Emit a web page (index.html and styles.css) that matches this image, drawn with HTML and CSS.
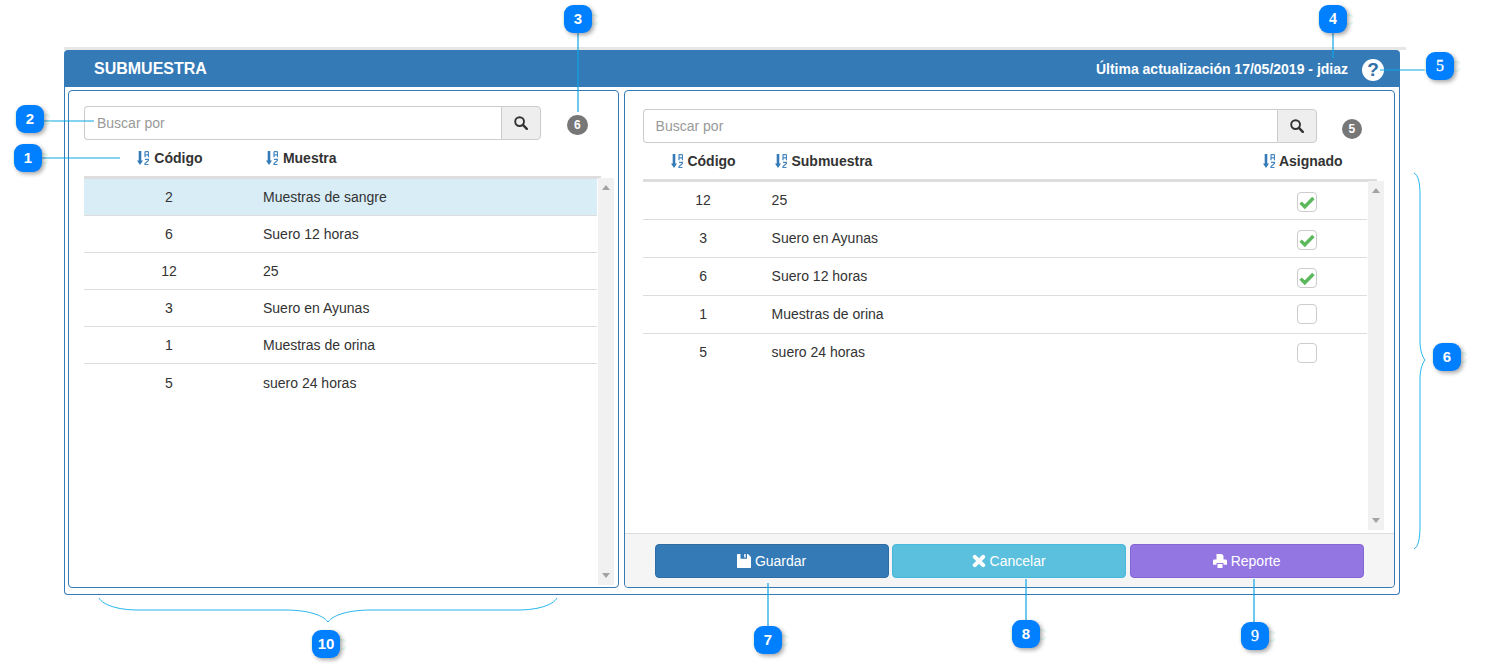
FILE: index.html
```html
<!DOCTYPE html>
<html lang="es">
<head>
  <meta charset="UTF-8">
  <title>Submuestra</title>
  <link rel="stylesheet" href="styles.css">
</head>
<body>
  <svg width="0" height="0" class="defs">
    <symbol id="i-sort" viewBox="0 0 12 14">
      <path d="M1.700 0h2.600v9.600h1.700L3 14 0 9.600h1.700z" fill="#337ab7"/>
      <path d="M8 6.200V1.100L8.600.6h2.300l.6.500v5.100M8 3.800h3.500M8 8.400h3.500v1L8 12.600v1h3.500" fill="none" stroke="#4485c0" stroke-width="1.200"/>
    </symbol>
    <symbol id="i-search" viewBox="0 0 14 14">
      <circle cx="5.600" cy="5.600" r="4.400" fill="none" stroke="#333" stroke-width="1.900"/>
      <path d="M8.900 8.900l3.900 3.900" stroke="#333" stroke-width="2.400" stroke-linecap="round"/>
    </symbol>
    <symbol id="i-check" viewBox="0 0 16 14">
      <path d="M1.600 7.600l4.200 4.200L14.400 3" fill="none" stroke="#5cb85c" stroke-width="3.400"/>
    </symbol>
  </svg>

  <div class="panel">
    <div class="panel-head">
      <span class="panel-title">SUBMUESTRA</span>
      <span class="panel-info">Última actualización 17/05/2019 - jdiaz</span>
      <span class="help">?</span>
    </div>
    <div class="panel-body">

      <div class="pane pane-left">
        <div class="search-row">
          <div class="search">
            <input class="search-input" type="text" placeholder="Buscar por">
            <button class="search-btn"><svg class="ico-search"><use href="#i-search"/></svg></button>
          </div>
          <span class="count">6</span>
        </div>
        <div class="list-head">
          <div class="col-code"><svg class="ico-sort"><use href="#i-sort"/></svg> Código</div>
          <div class="col-name"><svg class="ico-sort"><use href="#i-sort"/></svg> Muestra</div>
        </div>
        <div class="list-wrap">
          <div class="list">
            <div class="row selected"><div class="col-code">2</div><div class="col-name">Muestras de sangre</div></div>
            <div class="row"><div class="col-code">6</div><div class="col-name">Suero 12 horas</div></div>
            <div class="row"><div class="col-code">12</div><div class="col-name">25</div></div>
            <div class="row"><div class="col-code">3</div><div class="col-name">Suero en Ayunas</div></div>
            <div class="row"><div class="col-code">1</div><div class="col-name">Muestras de orina</div></div>
            <div class="row"><div class="col-code">5</div><div class="col-name">suero 24 horas</div></div>
          </div>
          <div class="scrollbar"><span class="arrow-up"></span><span class="arrow-down"></span></div>
        </div>
      </div>

      <div class="pane pane-right">
        <div class="pane-main">
          <div class="search-row">
            <div class="search">
              <input class="search-input" type="text" placeholder="Buscar por">
              <button class="search-btn"><svg class="ico-search"><use href="#i-search"/></svg></button>
            </div>
            <span class="count">5</span>
          </div>
          <div class="list-head">
            <div class="col-code"><svg class="ico-sort"><use href="#i-sort"/></svg> Código</div>
            <div class="col-name"><svg class="ico-sort"><use href="#i-sort"/></svg> Submuestra</div>
            <div class="col-check"><svg class="ico-sort"><use href="#i-sort"/></svg> Asignado</div>
          </div>
          <div class="list-wrap">
            <div class="list">
              <div class="row"><div class="col-code">12</div><div class="col-name">25</div><div class="col-check"><span class="box"><svg class="ico-check"><use href="#i-check"/></svg></span></div></div>
              <div class="row"><div class="col-code">3</div><div class="col-name">Suero en Ayunas</div><div class="col-check"><span class="box"><svg class="ico-check"><use href="#i-check"/></svg></span></div></div>
              <div class="row"><div class="col-code">6</div><div class="col-name">Suero 12 horas</div><div class="col-check"><span class="box"><svg class="ico-check"><use href="#i-check"/></svg></span></div></div>
              <div class="row"><div class="col-code">1</div><div class="col-name">Muestras de orina</div><div class="col-check"><span class="box"></span></div></div>
              <div class="row"><div class="col-code">5</div><div class="col-name">suero 24 horas</div><div class="col-check"><span class="box"></span></div></div>
            </div>
            <div class="scrollbar"><span class="arrow-up"></span><span class="arrow-down"></span></div>
          </div>
        </div>
        <div class="pane-foot">
          <button class="btn btn-save">
            <svg class="ico-btn" viewBox="0 0 14 14"><path fill="#fff" fill-rule="evenodd" d="M.8 0H11l3 3v10.200c0 .4-.4.800-.8.800H.8c-.4 0-.8-.4-.8-.8V.8C0 .4.400 0 .8 0zM3.500 0v4.800h6.500V0H8.700v3.400H7.200V0z"/></svg>
            Guardar
          </button>
          <button class="btn btn-cancel">
            <svg class="ico-btn" viewBox="0 0 14 14"><path d="M2.800 2.800l8.400 8.400m0-8.400l-8.400 8.400" stroke="#fff" stroke-width="4" stroke-linecap="round" fill="none"/></svg>
            Cancelar
          </button>
          <button class="btn btn-report">
            <svg class="ico-btn" viewBox="0 0 14 14"><path fill="#fff" d="M3.500 0h5.300L10.500 1.700V5.500h-7zM0 7c0-.8.600-1.400 1.400-1.400h11.200c.8 0 1.400.6 1.400 1.400v3.700h-3.500V9H3.500v1.700H0zM4.500 10h5v4h-5z"/></svg>
            Reporte
          </button>
        </div>
      </div>

    </div>
  </div>

  <!-- anotaciones -->
  <svg class="callouts" width="1488" height="667" viewBox="0 0 1488 667">
    <g fill="none" stroke="#0ea5e4" stroke-width="1.200">
      <path d="M42 158H120"/>
      <path d="M42 121H94"/>
      <path d="M578 32V112"/>
      <path d="M1333 32V58"/>
      <path d="M1380 70H1426"/>
      <path d="M768 583V626"/>
      <path d="M1026 579V620"/>
      <path d="M1254 579V622"/>
    </g>
    <g fill="none" stroke="#25b5ee" stroke-width="1">
      <path d="M99 598C103 605 118 610 138 610H285C305 610 322 614 328 622C334 614 351 610 371 610H518C538 610 553 605 557 598"/>
      <path d="M1414 173C1418 175 1420 182 1420 195V340C1420 350 1422 356 1425 360C1422 364 1420 370 1420 380V525C1420 540 1418 547 1414 549"/>
    </g>
  </svg>

  <div class="mark mark-1"><span class="dot">1</span></div>
  <div class="mark mark-2"><span class="dot">2</span></div>
  <div class="mark mark-3"><span class="dot">3</span></div>
  <div class="mark mark-4"><span class="dot serif bold">4</span></div>
  <div class="mark mark-5"><span class="dot serif">5</span></div>
  <div class="mark mark-6"><span class="dot">6</span></div>
  <div class="mark mark-7"><span class="dot">7</span></div>
  <div class="mark mark-8"><span class="dot">8</span></div>
  <div class="mark mark-9"><span class="dot serif">9</span></div>
  <div class="mark mark-10"><span class="dot">10</span></div>
</body>
</html>
```

FILE: styles.css
```css
* {
  box-sizing: border-box;
}
html, body {
  height: 667px;
  overflow: hidden;
}
body {
  margin: 0;
  padding: 47px 82px 0 64px;
  background-color: #fff;
  font-family: "Liberation Sans", Arial, sans-serif;
  font-size: 14px;
  color: #333;
  position: relative;
}
.defs {
  position: absolute;
}

/* panel principal */
.panel {
  width: 1336px;
  height: 548px;
}
.panel::before {
  content: "";
  display: block;
  width: 1342px;
  height: 3px;
  background-color: #e6e6e6;
}
.panel-head {
  height: 37px;
  background-color: #337ab7;
  color: #fff;
  border-radius: 4px 4px 0 0;
  display: flex;
  align-items: center;
  padding: 0 16px 0 30px;
}
.panel-title {
  font-size: 16px;
  font-weight: bold;
  flex: 1;
}
.panel-info {
  font-weight: bold;
  margin-right: 14px;
}
.help {
  width: 22px;
  height: 22px;
  margin-top: 2px;
  border-radius: 50%;
  background-color: #fff;
  color: #2f6ea6;
  font-size: 19px;
  font-weight: bold;
  line-height: 22px;
  text-align: center;
}
.panel-body {
  height: 508px;
  border: 1px solid #337ab7;
  border-top: 0;
  border-radius: 0 0 4px 4px;
  padding: 3px 4px 6px 3px;
  display: flex;
  gap: 5px;
}

/* paneles internos */
.pane {
  border: 1px solid #337ab7;
  border-radius: 4px;
  display: flex;
  flex-direction: column;
  height: 498px;
}
.pane-left {
  width: 551px;
  padding: 15px 4px 2px 15px;
}
.pane-right {
  width: 772px;
}
.pane-main {
  flex: 1;
  padding: 18px 10px 3px 18px;
  display: flex;
  flex-direction: column;
  min-height: 0;
}
.pane-foot {
  height: 54px;
  background-color: #f5f5f5;
  border-top: 1px solid #ddd;
  border-radius: 0 0 4px 4px;
  padding: 10px 30px 0;
  display: flex;
  gap: 3px;
}

/* buscador */
.search-row {
  display: flex;
  align-items: center;
  height: 34px;
  flex: none;
}
.pane-left .search {
  width: 457px;
}
.pane-right .search {
  width: 674px;
}
.search {
  display: flex;
  height: 34px;
}
.search-input {
  flex: 1;
  min-width: 0;
  height: 34px;
  border: 1px solid #ccc;
  border-right: 0;
  border-radius: 4px 0 0 4px;
  padding: 0 12px;
  font-family: inherit;
  font-size: 14px;
  color: #555;
  outline: none;
}
.search-input::placeholder {
  color: #999;
}
.search-btn {
  width: 40px;
  height: 34px;
  background-color: #eee;
  border: 1px solid #ccc;
  border-radius: 0 4px 4px 0;
  padding: 0;
  display: flex;
  align-items: center;
  justify-content: center;
}
.ico-search {
  width: 14px;
  height: 14px;
}
.count {
  background-color: #777;
  color: #fff;
  font-size: 12px;
  font-weight: bold;
  line-height: 12px;
  border-radius: 10px;
  padding: 4px 7px;
}
.pane-left .count {
  margin-left: 26px;
  margin-top: 4px;
}
.pane-right .count {
  margin-left: 25px;
  margin-top: 5px;
}

/* listas */
.list-head {
  display: flex;
  align-items: center;
  font-weight: bold;
  border-bottom: 3px solid #ddd;
  flex: none;
  height: 39px;
}
.pane-left .list-head {
  width: 517px;
}
.pane-right .list-head {
  width: 734px;
}
.ico-sort {
  width: 12px;
  height: 14px;
  margin-right: 1px;
  vertical-align: -2px;
}
.col-code {
  width: 170px;
  text-align: center;
  flex: none;
}
.pane-left .list-head .col-code {
  padding-left: 2px;
}
.pane-right .col-code {
  width: 121px;
}
.col-name {
  flex: 1;
  padding-left: 9px;
}
.pane-right .col-name {
  padding-left: 8px;
}
.list-head .col-name {
  padding-left: 12px;
}
.pane-right .list-head .col-name {
  padding-left: 11px;
}
.col-check {
  width: 120px;
  text-align: center;
  flex: none;
}
.list-head .col-check {
  padding-right: 28px;
}
.list-wrap {
  display: flex;
  flex: 1;
  min-height: 0;
}
.list {
  flex: 1;
}
.row {
  height: 38px;
  padding-bottom: 2px;
  display: flex;
  align-items: center;
  border-bottom: 1px solid #ddd;
}
.pane-left .row {
  height: 37px;
  padding-bottom: 0;
}
.row:last-child {
  border-bottom: 0;
}
.row.selected {
  background-color: #d9edf7;
}
.scrollbar {
  width: 16px;
  margin: -1px 0 0 1px;
  background-color: #f1f1f1;
  position: relative;
}
.arrow-up,
.arrow-down {
  position: absolute;
  left: 4px;
  width: 0;
  height: 0;
  border-left: 4px solid transparent;
  border-right: 4px solid transparent;
}
.arrow-up {
  top: 7px;
  border-bottom: 5px solid #a3a3a3;
}
.arrow-down {
  bottom: 7px;
  border-top: 5px solid #a3a3a3;
}
.box {
  width: 20px;
  height: 20px;
  margin-top: 4px;
  border: 1px solid #ccc;
  border-radius: 4px;
  background-color: #fff;
  display: inline-flex;
  align-items: center;
  justify-content: center;
}
.ico-check {
  width: 16px;
  height: 14px;
}

/* botones */
.btn {
  width: 234px;
  height: 34px;
  border: 1px solid transparent;
  border-radius: 4px;
  color: #fff;
  font-family: inherit;
  font-size: 14px;
  display: flex;
  align-items: center;
  justify-content: center;
  gap: 4px;
  padding: 0;
}
.btn-save {
  background-color: #337ab7;
  border-color: #2e6da4;
}
.btn-cancel {
  background-color: #5bc0de;
  border-color: #46b8da;
}
.btn-report {
  background-color: #9476e3;
  border-color: #8466d3;
  margin-left: 1px;
}
.ico-btn {
  width: 14px;
  height: 14px;
}

/* anotaciones */
.callouts {
  position: absolute;
  left: 0;
  top: 0;
  pointer-events: none;
}
.mark {
  position: absolute;
  width: 28px;
  height: 28px;
}
/* marca de agua clara que asoma detras de cada numero */
.mark::before {
  content: "Mac";
  position: absolute;
  left: -3px;
  top: 2px;
  font-size: 20px;
  color: #e6fbf1;
  white-space: nowrap;
}
.dot {
  position: absolute;
  left: 0;
  top: 0;
  width: 28px;
  height: 28px;
  border-radius: 9px;
  background-color: #007fff;
  color: #fff;
  font-size: 15px;
  font-weight: bold;
  line-height: 28px;
  text-align: center;
  box-shadow: 2px 2px 4px rgba(0, 0, 0, 0.35);
}
.dot.serif {
  font-family: "Liberation Serif", serif;
  font-size: 16px;
  font-weight: normal;
  -webkit-text-stroke: 0.3px #fff;
}
.dot.bold {
  font-weight: bold;
  -webkit-text-stroke: 0;
}
.mark-1 { left: 14px; top: 144px; }
.mark-2 { left: 16px; top: 105px; }
.mark-3 { left: 564px; top: 5px; }
.mark-4 { left: 1319px; top: 5px; }
.mark-5 { left: 1426px; top: 52px; }
.mark-6 { left: 1433px; top: 343px; }
.mark-7 { left: 754px; top: 626px; }
.mark-8 { left: 1012px; top: 620px; }
.mark-9 { left: 1241px; top: 622px; }
.mark-10 { left: 312px; top: 630px; }
```
